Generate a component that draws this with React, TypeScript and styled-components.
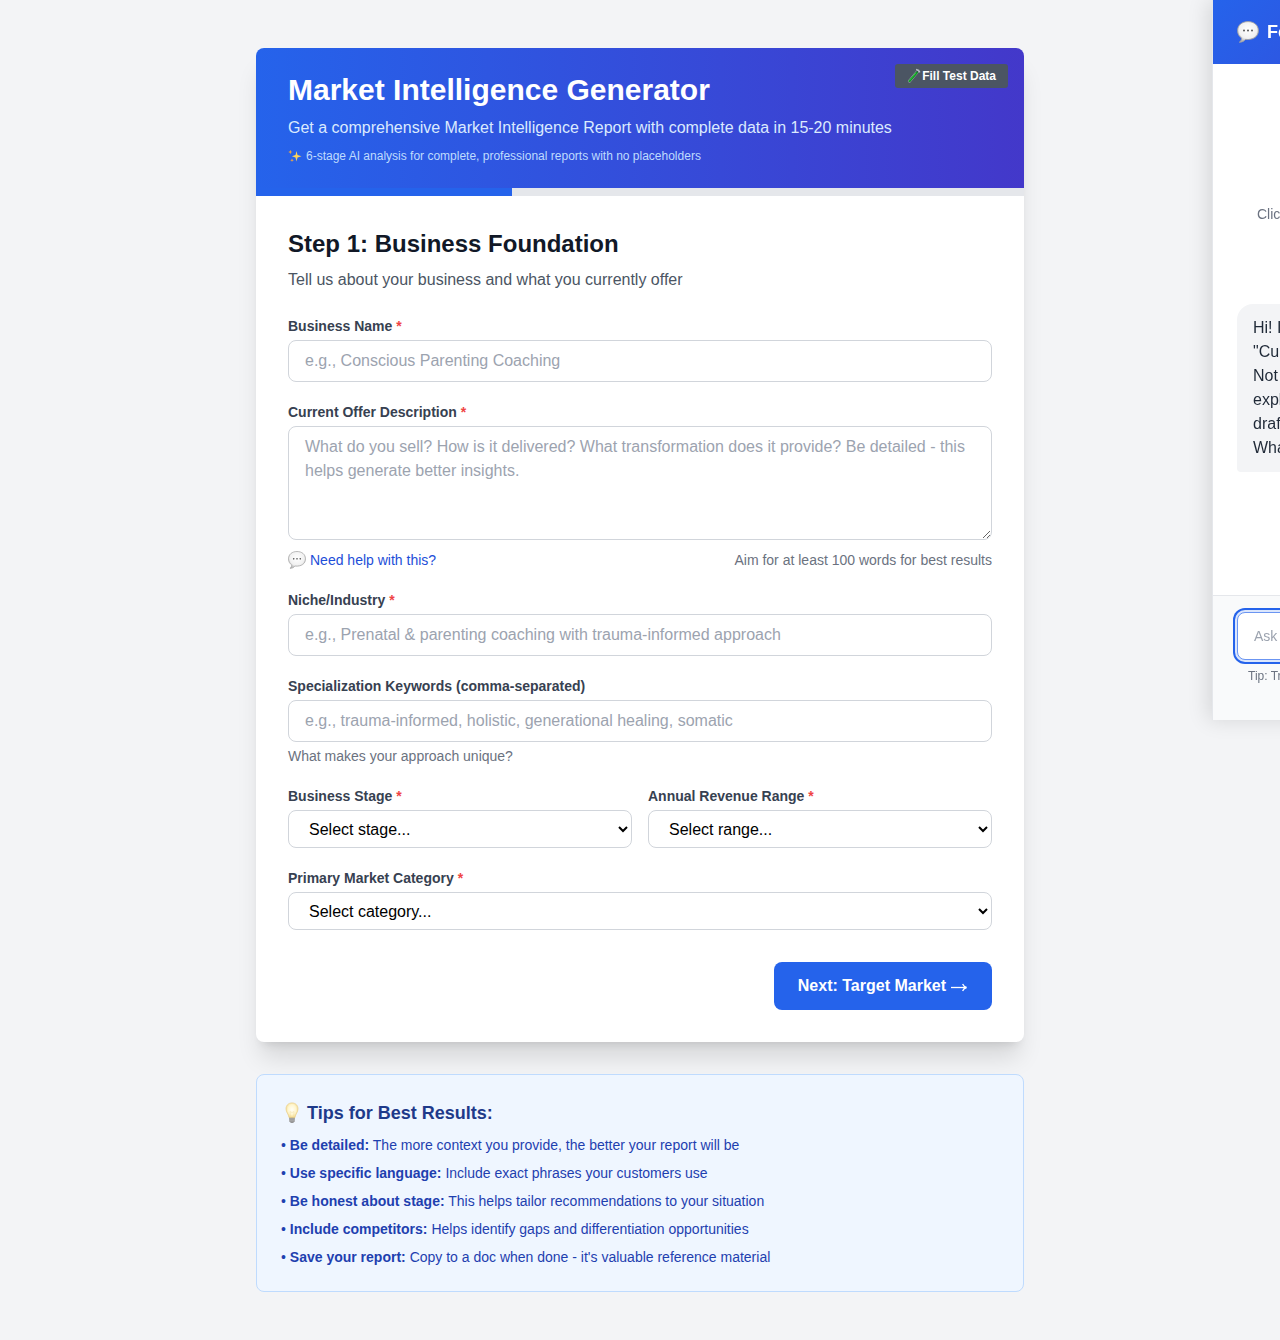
import React from 'react';
import styled, { createGlobalStyle, css } from 'styled-components';

const GlobalStyle = createGlobalStyle`
  *, *::before, *::after { box-sizing: border-box; }
  body {
    margin: 0;
    background: #f3f4f6;
    color: #111827;
    font-family: "Liberation Sans", Arial, Helvetica, sans-serif;
    font-size: 16px;
    line-height: 24px;
    overflow-x: hidden;
  }
  h1, h2, h3, p, ul { margin: 0; padding: 0; }
  button, input, textarea, select { font: inherit; margin: 0; }
`;

const Page = styled.main`
  max-width: 768px;
  margin: 0 auto;
  padding: 48px 0;
`;

const Card = styled.section`
  background: #fff;
  border-radius: 8px;
  overflow: hidden;
  box-shadow: 0 20px 25px -5px rgba(0, 0, 0, 0.12), 0 8px 10px -6px rgba(0, 0, 0, 0.1);
`;

const Header = styled.header`
  position: relative;
  padding: 24px 32px;
  background: linear-gradient(to right, #2563eb, #4338ca);
`;

const Title = styled.h1`
  color: #fff;
  font-size: 30px;
  line-height: 36px;
  font-weight: 700;
`;

const Subtitle = styled.p`
  margin-top: 8px;
  color: #dbeafe;
`;

const Note = styled.p`
  display: flex;
  align-items: center;
  gap: 4px;
  margin-top: 8px;
  color: #bfdbfe;
  font-size: 12px;
  line-height: 16px;
`;

const TestButton = styled.button`
  position: absolute;
  top: 16px;
  right: 16px;
  display: flex;
  align-items: center;
  padding: 4px 12px;
  border: 0;
  border-radius: 3px;
  background: #4b5563;
  color: #fff;
  font-size: 12px;
  line-height: 16px;
  font-weight: 700;
`;

const Track = styled.div`
  height: 8px;
  background: #e5e7eb;
`;

const Progress = styled.div`
  height: 100%;
  background: #2563eb;
`;

const Body = styled.form`
  padding: 32px;
`;

const StepTitle = styled.h2`
  font-size: 24px;
  line-height: 32px;
  font-weight: 700;
`;

const StepText = styled.p`
  margin-top: 8px;
  color: #4b5563;
`;

const Fields = styled.div`
  display: grid;
  gap: 20px;
  margin-top: 24px;
`;

const Pair = styled.div`
  display: grid;
  grid-template-columns: 1fr 1fr;
  gap: 16px;
`;

const FieldBox = styled.div`
  display: flex;
  flex-direction: column;
  gap: 4px;
  min-width: 0;
`;

const Label = styled.label`
  color: #374151;
  font-size: 14px;
  line-height: 20px;
  font-weight: 700;
`;

const Star = styled.span`
  color: #ef4444;
`;

const control = css`
  display: block;
  width: 100%;
  padding: 8px 16px;
  border: 1px solid #d1d5db;
  border-radius: 8px;
  background: #fff;
  color: #000;
  line-height: 24px;
  &::placeholder { color: #9ca3af; opacity: 1; }
`;

const Input = styled.input`
  ${control}
  height: 42px;
`;

const TextArea = styled.textarea`
  ${control}
  resize: vertical;
`;

const Select = styled.select`
  ${control}
  height: 38px;
`;

const HelpRow = styled.div`
  display: flex;
  justify-content: space-between;
  align-items: center;
  padding-top: 6px;
`;

const Hint = styled.p`
  color: #6b7280;
  font-size: 14px;
  line-height: 20px;
`;

const HelpButton = styled.button`
  display: flex;
  align-items: center;
  gap: 4px;
  padding: 0;
  border: 0;
  background: none;
  color: #1d4ed8;
  font-size: 14px;
  line-height: 20px;
`;

const Actions = styled.div`
  display: flex;
  justify-content: flex-end;
  margin-top: 32px;
`;

const NextButton = styled.button`
  display: flex;
  align-items: center;
  gap: 4px;
  padding: 12px 24px;
  border: 0;
  border-radius: 8px;
  background: #2563eb;
  color: #fff;
  font-weight: 700;
`;

const Tips = styled.section`
  margin-top: 32px;
  padding: 24px;
  border: 1px solid #bfdbfe;
  border-radius: 8px;
  background: #eff6ff;
`;

const TipsTitle = styled.h3`
  display: flex;
  align-items: center;
  gap: 4px;
  color: #1e3a8a;
  font-size: 18px;
  line-height: 28px;
  font-weight: 700;
`;

const TipList = styled.ul`
  display: grid;
  gap: 8px;
  margin-top: 8px;
  list-style: none;
  color: #1e40af;
  font-size: 14px;
  line-height: 20px;
`;

const Drawer = styled.aside`
  position: fixed;
  top: 0;
  right: -380px;
  display: flex;
  flex-direction: column;
  width: 448px;
  height: 720px;
  border-left: 1px solid #e5e7eb;
  background: #fff;
  box-shadow: -4px 0 20px rgba(0, 0, 0, 0.12);
`;

const DrawerHeader = styled.header`
  display: flex;
  align-items: center;
  gap: 8px;
  padding: 16px 24px;
  background: linear-gradient(135deg, #2563eb, #4338ca);
`;

const DrawerTitle = styled.h2`
  color: #fff;
  font-size: 18px;
  line-height: 32px;
  font-weight: 700;
`;

const Messages = styled.div`
  flex: 1;
  padding: 140px 24px 24px;
`;

const DrawerHint = styled.p`
  padding: 0 20px;
  color: #6b7280;
  font-size: 14px;
  line-height: 20px;
`;

const Message = styled.p`
  width: 340px;
  margin-top: 80px;
  padding: 12px 16px;
  border-radius: 16px 16px 16px 4px;
  background: #f3f4f6;
  color: #1f2937;
  white-space: pre-line;
`;

const DrawerFooter = styled.footer`
  height: 125px;
  padding: 16px 24px;
  border-top: 1px solid #e5e7eb;
  background: #f9fafb;
`;

const ChatInput = styled.input`
  display: block;
  width: 100%;
  height: 48px;
  padding: 8px 16px;
  border: 1px solid #6b95f2;
  border-radius: 8px;
  background: #fff;
  box-shadow: 0 0 0 2px #dbe6fc, 0 0 0 4px #2563eb;
  font-size: 14px;
  &::placeholder { color: #9ca3af; opacity: 1; }
`;

const ChatTip = styled.p`
  margin-top: 8px;
  padding-left: 11px;
  color: #6b7280;
  font-size: 12px;
  line-height: 16px;
`;

function Sparkles() {
  return (
    <svg width="14" height="14" viewBox="0 0 14 14" aria-hidden="true">
      <path d="M8.5 2 L9.5 6 L13.5 7.2 L9.5 8.4 L8.5 12.4 L7.5 8.4 L3.8 7.2 L7.5 6Z" fill="#fbd25a" />
      <path d="M2.3 .8 L2.9 2.5 L4.5 3 L2.9 3.6 L2.3 5.2 L1.7 3.6 L.2 3 L1.7 2.5Z" fill="#f5a83c" />
      <path d="M4 9.4 L4.5 10.7 L5.8 11.2 L4.5 11.7 L4 13 L3.5 11.7 L2.2 11.2 L3.5 10.7Z" fill="#f5a83c" />
    </svg>
  );
}

function TestTube() {
  return (
    <svg width="15" height="16" viewBox="0 0 15 16" aria-hidden="true">
      <path d="M11.2 2.8 L2.4 13.2" stroke="#9aa5a8" strokeWidth="3" strokeLinecap="round" />
      <path d="M10.9 3.2 L2.6 13" stroke="#34424a" strokeWidth="1.8" strokeLinecap="round" />
      <path d="M9.8 4.6 L2.5 13.1" stroke="#0c9d22" strokeWidth="2" strokeLinecap="round" />
      <path d="M8.8 5 L2.4 12.4" stroke="#58d65c" strokeWidth=".6" />
      <path d="M9.6 1.4 L12.8 4" stroke="#c3cbd0" strokeWidth="1.1" strokeLinecap="round" />
    </svg>
  );
}

function SpeechBubble({ size }: { size: number }) {
  const id = `bubble-${size}`;
  return (
    <svg width={size} height={size} viewBox="0 0 22 22" aria-hidden="true">
      <defs>
        <radialGradient id={id} cx=".5" cy=".4" r=".6">
          <stop offset="0" stopColor="#fff" />
          <stop offset=".7" stopColor="#f1f1f1" />
          <stop offset="1" stopColor="#b5b5b5" />
        </radialGradient>
      </defs>
      <path
        d="M11 .6 C5 .6 .6 4.2 .6 9.6 C.6 13.2 2.3 15.6 4.6 17 C4.6 18.8 3.8 20.2 2.4 21.2 C5.2 21.3 7.2 20 8.4 18.4 C16.5 19.2 21.4 15.4 21.4 9.6 C21.4 4.2 17 .6 11 .6Z"
        fill={`url(#${id})`}
        stroke="#a3a3a3"
        strokeWidth=".9"
      />
      <circle cx="7" cy="9.6" r="1" fill="#555" />
      <circle cx="11" cy="9.6" r="1" fill="#555" />
      <circle cx="15" cy="9.6" r="1" fill="#555" />
    </svg>
  );
}

function Bulb() {
  return (
    <svg width="22" height="22" viewBox="0 0 22 22" aria-hidden="true">
      <defs>
        <radialGradient id="glow" cx=".5" cy=".45" r=".55">
          <stop offset="0" stopColor="#fffef6" />
          <stop offset=".6" stopColor="#fff6cf" />
          <stop offset="1" stopColor="#f3d98a" />
        </radialGradient>
      </defs>
      <path d="M8 15 H14 L13.6 19.4 Q11 22.6 8.4 19.4Z" fill="#8b8b8b" />
      <path d="M8.2 17 H13.8 M8.4 18.9 H13.6" stroke="#c9c9c9" strokeWidth=".7" />
      <path d="M11 .9 C7.3 .9 5 3.5 5 6.9 C5 10.3 7.5 11.7 8 15.6 H14 C14.5 11.7 17 10.3 17 6.9 C17 3.5 14.7 .9 11 .9Z" fill="url(#glow)" stroke="#e9cf8b" strokeWidth=".7" />
      <path d="M9.6 15.2 L9 9.5 L11 10.6 L13 9.5 L12.4 15.2" fill="none" stroke="#f0dc9e" strokeWidth=".4" />
    </svg>
  );
}

function ArrowRight() {
  return (
    <svg width="18" height="16" viewBox="0 0 18 16" fill="none" stroke="#fff" aria-hidden="true">
      <path d="M1 9.5 H16" strokeWidth="1.3" />
      <path d="M12.6 6 C13.4 7.8 14.6 9 16.6 9.5 C14.6 10 13.4 11.2 12.6 13" strokeWidth="1.3" />
    </svg>
  );
}

type FieldProps = { id: string; label: string; required?: boolean; children: React.ReactNode };

function Field({ id, label, required, children }: FieldProps) {
  return (
    <FieldBox>
      <Label htmlFor={id}>
        {label}
        {required && <Star> *</Star>}
      </Label>
      {children}
    </FieldBox>
  );
}

const tips = [
  ['Be detailed:', 'The more context you provide, the better your report will be'],
  ['Use specific language:', 'Include exact phrases your customers use'],
  ['Be honest about stage:', 'This helps tailor recommendations to your situation'],
  ['Include competitors:', 'Helps identify gaps and differentiation opportunities'],
  ['Save your report:', "Copy to a doc when done - it's valuable reference material"],
];

const greeting = `Hi! I'm here to help you with your
"Current Offer Description" answer.
Not sure what to write? I can
explain the question or help you
draft an answer.
What would you like to do?`;

export default function App() {
  const step = 1;
  const steps = 3;
  return (
    <>
      <GlobalStyle />
      <Page>
        <Card>
          <Header>
            <Title>Market Intelligence Generator</Title>
            <Subtitle>Get a comprehensive Market Intelligence Report with complete data in 15-20 minutes</Subtitle>
            <Note>
              <Sparkles />
              6-stage AI analysis for complete, professional reports with no placeholders
            </Note>
            <TestButton type="button">
              <TestTube />
              Fill Test Data
            </TestButton>
          </Header>
          <Track>
            <Progress style={{ width: `${(step / steps) * 100}%` }} />
          </Track>
          <Body onSubmit={(e) => e.preventDefault()}>
            <StepTitle>Step 1: Business Foundation</StepTitle>
            <StepText>Tell us about your business and what you currently offer</StepText>
            <Fields>
              <Field id="name" label="Business Name" required>
                <Input id="name" placeholder="e.g., Conscious Parenting Coaching" />
              </Field>
              <Field id="offer" label="Current Offer Description" required>
                <TextArea
                  id="offer"
                  rows={4}
                  placeholder="What do you sell? How is it delivered? What transformation does it provide? Be detailed - this helps generate better insights."
                />
                <HelpRow>
                  <HelpButton type="button">
                    <SpeechBubble size={18} />
                    Need help with this?
                  </HelpButton>
                  <Hint>Aim for at least 100 words for best results</Hint>
                </HelpRow>
              </Field>
              <Field id="niche" label="Niche/Industry" required>
                <Input id="niche" placeholder="e.g., Prenatal & parenting coaching with trauma-informed approach" />
              </Field>
              <Field id="keywords" label="Specialization Keywords (comma-separated)">
                <Input id="keywords" placeholder="e.g., trauma-informed, holistic, generational healing, somatic" />
                <Hint>What makes your approach unique?</Hint>
              </Field>
              <Pair>
                <Field id="stage" label="Business Stage" required>
                  <Select id="stage">
                    <option>Select stage...</option>
                  </Select>
                </Field>
                <Field id="revenue" label="Annual Revenue Range" required>
                  <Select id="revenue">
                    <option>Select range...</option>
                  </Select>
                </Field>
              </Pair>
              <Field id="category" label="Primary Market Category" required>
                <Select id="category">
                  <option>Select category...</option>
                </Select>
              </Field>
            </Fields>
            <Actions>
              <NextButton type="submit">
                Next: Target Market
                <ArrowRight />
              </NextButton>
            </Actions>
          </Body>
        </Card>
        <Tips>
          <TipsTitle>
            <Bulb />
            Tips for Best Results:
          </TipsTitle>
          <TipList>
            {tips.map(([name, text]) => (
              <li key={name}>
                • <strong>{name}</strong> {text}
              </li>
            ))}
          </TipList>
        </Tips>
      </Page>
      <Drawer aria-label="Form help">
        <DrawerHeader>
          <SpeechBubble size={22} />
          <DrawerTitle>Form Helper</DrawerTitle>
        </DrawerHeader>
        <Messages>
          <DrawerHint>Click a question to get help with your answer</DrawerHint>
          <Message>{greeting}</Message>
        </Messages>
        <DrawerFooter>
          <ChatInput aria-label="Your question" placeholder="Ask a question..." />
          <ChatTip>Tip: Try asking for an example</ChatTip>
        </DrawerFooter>
      </Drawer>
    </>
  );
}
